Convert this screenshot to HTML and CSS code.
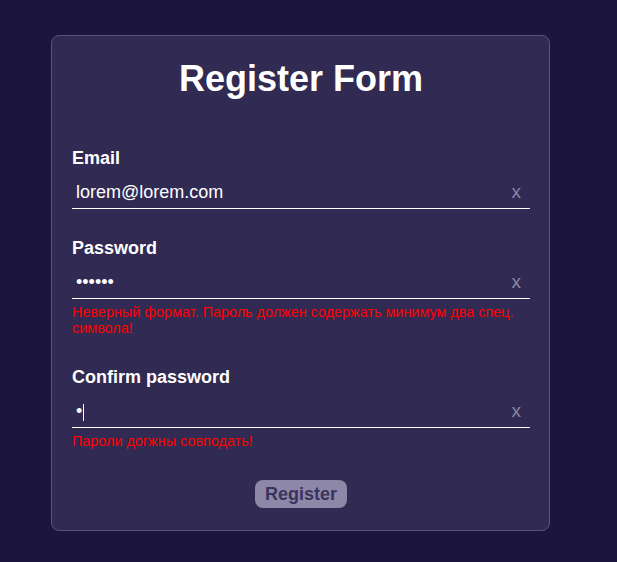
FILE: index.html
```html
<!DOCTYPE html>
<html lang="ru">
<head>
<meta charset="utf-8">
<title>Register Form</title>
<link rel="stylesheet" href="styles.css">
</head>
<body>
<form class="card" onsubmit="return false">
  <h1 class="title">Register Form</h1>

  <div class="field">
    <label class="label" for="email">Email</label>
    <div class="row">
      <input class="input" id="email" type="text" value="lorem@lorem.com">
      <button class="clear" type="button">x</button>
    </div>
  </div>

  <div class="field field-error">
    <label class="label" for="pass">Password</label>
    <div class="row">
      <input class="input" id="pass" type="password" value="123456">
      <button class="clear" type="button">x</button>
    </div>
    <div class="error">Неверный формат. Пароль должен содержать минимум два спец. символа!</div>
  </div>

  <div class="field field-error">
    <label class="label" for="confirm">Confirm password</label>
    <div class="row">
      <input class="input" id="confirm" type="password" value="1">
      <span class="caret"></span>
      <button class="clear" type="button">x</button>
    </div>
    <div class="error">Пароли догжны совподать!</div>
  </div>

  <div class="actions">
    <button class="submit" type="submit">Register</button>
  </div>
</form>
</body>
</html>
```

FILE: styles.css
```css
html, body {
  margin: 0;
  padding: 0;
  background: #1b1540;
  font-family: "Liberation Sans", Arial, sans-serif;
}

.card {
  box-sizing: border-box;
  width: 499px;
  margin: 35px 0 0 51px;
  padding: 22px 19px 22px 20px;
  background: #312a52;
  border: 1px solid #5a547a;
  border-radius: 8px;
  display: flex;
  flex-direction: column;
}

.title {
  margin: 0 0 48px;
  font-size: 36px;
  line-height: 42px;
  font-weight: 700;
  color: #ffffff;
  text-align: center;
}

.field {
  display: flex;
  flex-direction: column;
  margin-bottom: 29px;
}

.field-error {
  margin-bottom: 31px;
}

.label {
  font-size: 18px;
  line-height: 21px;
  font-weight: 700;
  color: #ffffff;
}

.row {
  position: relative;
  display: flex;
  align-items: stretch;
  border-bottom: 1px solid #ffffff;
}

.input {
  flex: 1;
  min-width: 0;
  box-sizing: border-box;
  height: 39px;
  padding: 8px 4px 0 4px;
  margin: 0;
  border: none;
  outline: none;
  background: transparent;
  color: #ffffff;
  caret-color: #ffffff;
  font-family: "Liberation Sans", Arial, sans-serif;
  font-size: 18px;
}

.caret {
  position: absolute;
  left: 11px;
  top: 16px;
  width: 1px;
  height: 17px;
  background: #ffffff;
}

.clear {
  box-sizing: border-box;
  height: 39px;
  padding: 7px 9px 0 8px;
  margin: 0;
  border: none;
  background: transparent;
  color: #8a86a2;
  font-family: "Liberation Sans", Arial, sans-serif;
  font-size: 19px;
  cursor: pointer;
}

.error {
  margin-top: 5px;
  font-size: 14.4px;
  line-height: 16px;
  color: #ff0000;
}

.actions {
  display: flex;
  justify-content: center;
}

.submit {
  padding: 3px 10px;
  border: none;
  border-radius: 8px;
  background: #8e88a8;
  color: #3a335f;
  font-family: "Liberation Sans", Arial, sans-serif;
  font-size: 18px;
  line-height: 22px;
  font-weight: 700;
  cursor: pointer;
}
```
